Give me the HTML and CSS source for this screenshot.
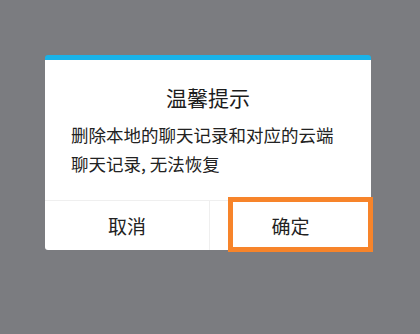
FILE: index.html
```html
<!DOCTYPE html>
<html lang="zh-CN">
<head>
<meta charset="utf-8">
<title>温馨提示</title>
<link rel="stylesheet" href="styles.css">
</head>
<body>
  <div class="dialog">
    <div class="title">温馨提示</div>
    <div class="message">删除本地的聊天记录和对应的云端聊天记录, 无法恢复</div>
    <div class="actions">
      <div class="btn">取消</div>
      <div class="btn btn-ok">确定</div>
    </div>
    <div class="highlight"></div>
  </div>
</body>
</html>
```
FILE: styles.css
```css
html, body {
  margin: 0;
  padding: 0;
}
body {
  background: #7b7c80;
  width: 420px;
  height: 334px;
  padding: 55px 0 0 45px;
  box-sizing: border-box;
  font-family: "Noto Sans CJK SC", "Noto Sans", sans-serif;
}
.dialog {
  position: relative;
  width: 326px;
  background: #ffffff;
  border-top: 5px solid #19b3e9;
  border-radius: 3px;
}
.title {
  padding-top: 22px;
  font-size: 21px;
  line-height: 30px;
  text-align: center;
  color: #1c1c1c;
}
.message {
  padding: 8px 26px 22px 26px;
  font-size: 17.5px;
  line-height: 29px;
  color: #222222;
}
.actions {
  display: grid;
  grid-template-columns: 164px 1fr;
  border-top: 1px solid #efefef;
  height: 49px;
}
.btn {
  display: flex;
  align-items: center;
  justify-content: center;
  font-size: 19px;
  color: #222222;
}
.btn-ok {
  border-left: 1px solid #efefef;
}
.highlight {
  position: absolute;
  left: 183px;
  top: 137px;
  width: 145px;
  height: 55px;
  box-sizing: border-box;
  border: 5.5px solid #f7842a;
}
```
